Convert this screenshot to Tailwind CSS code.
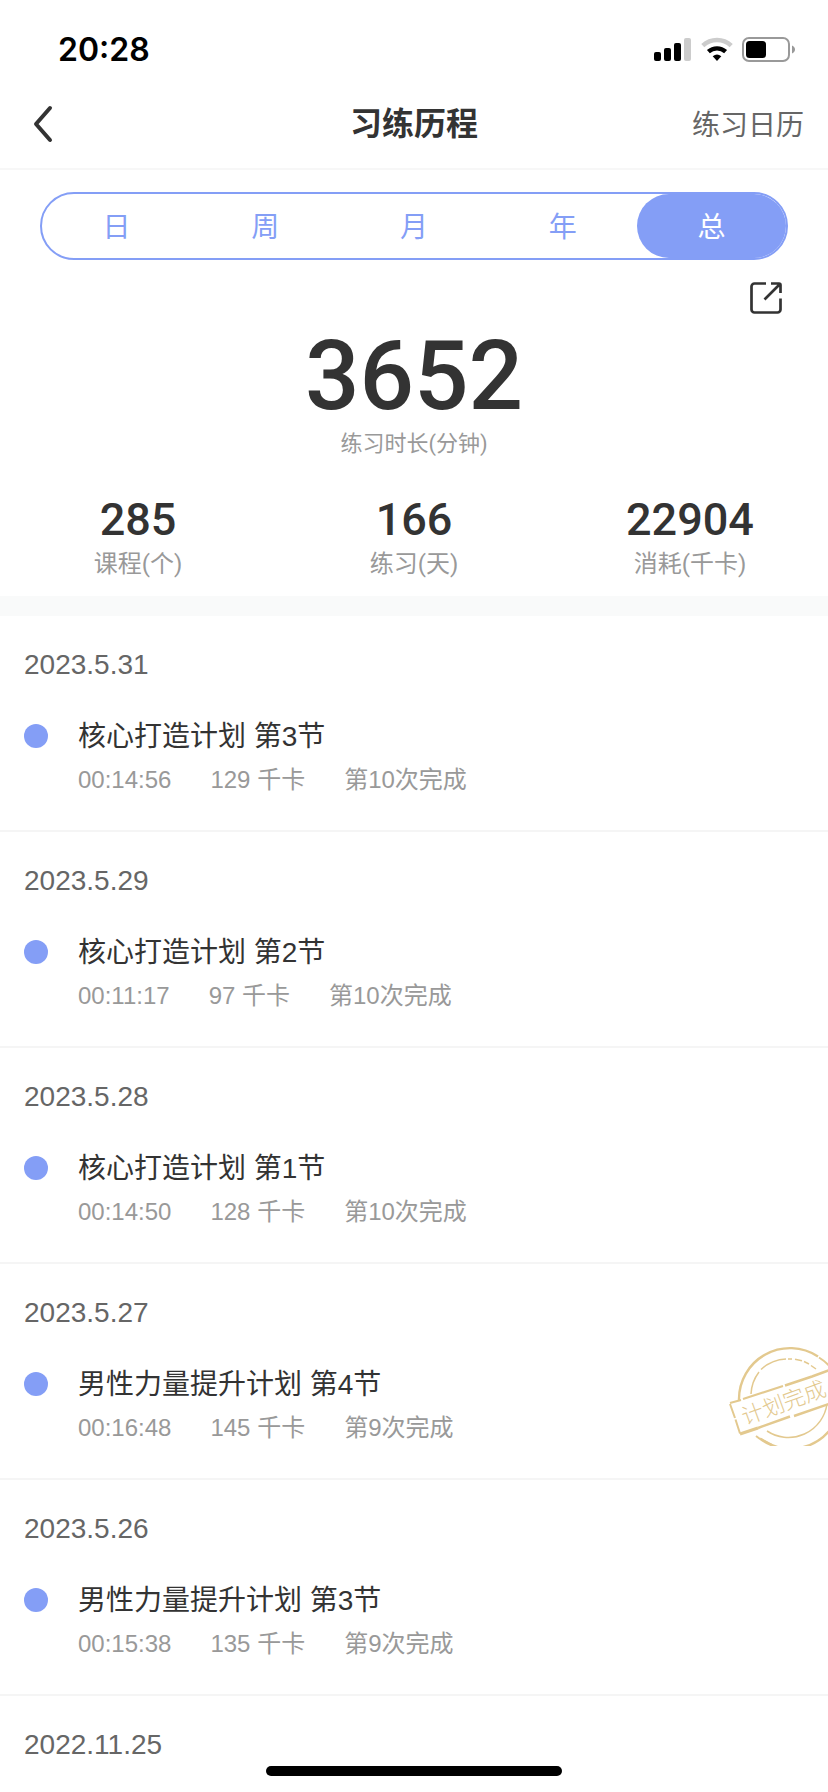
<!DOCTYPE html>
<html lang="zh-CN">
<head>
<meta charset="utf-8">
<meta name="viewport" content="width=device-width, initial-scale=1">
<title>习练历程</title>
<script src="https://cdn.jsdelivr.net/npm/@tailwindcss/browser@4"></script>
</head>
<body class="min-h-screen bg-white font-['Liberation_Sans','Noto_Sans_CJK_SC',sans-serif] text-[#333333]">
<!-- Status bar -->
<div class="flex h-20 items-center justify-between pt-5 pr-8 pl-[58px] text-black">
  <span class="font-['Inter',sans-serif] text-[32px] leading-10 font-semibold">20:28</span>
  <div class="flex items-center gap-[9px]">
    <svg class="h-[26px] w-[38px]" viewBox="0 0 38 26" aria-hidden="true">
      <rect x="0" y="15" width="7" height="9" rx="2"/><rect x="10" y="11" width="7" height="13" rx="2"/><rect x="20" y="6" width="7" height="18" rx="2"/><rect x="30" y="1" width="7" height="23" rx="2" fill="#cccccc"/>
    </svg>
    <svg class="h-[26px] w-8" viewBox="0 0 32 26" fill="none" aria-hidden="true">
      <path d="M1.8 8.600a21 21 0 0 1 28.400 0" stroke="#cccccc" stroke-width="4.600"/>
      <path d="M7.400 14.600a13 13 0 0 1 17.200 0" stroke="#000" stroke-width="4.400"/>
      <path d="M11.700 19.200a6.800 6.800 0 0 1 8.600 0L16 24z" fill="#000"/>
    </svg>
    <svg class="h-[26px] w-[54px]" viewBox="0 0 54 26" fill="none" aria-hidden="true">
      <rect x="1" y="1" width="46" height="23" rx="6" stroke="#999999" stroke-width="2"/>
      <rect x="4" y="4" width="20" height="17" rx="3.500" fill="#000"/>
      <path d="M50 8.500c4 1.500 4 6.500 0 8z" fill="#999999"/>
    </svg>
  </div>
</div>

<!-- Title bar -->
<header class="grid h-[90px] grid-cols-3 items-center border-b-2 border-[#f7f7f7] px-6">
  <button type="button" aria-label="返回" class="flex w-10 justify-center">
    <svg class="h-10 w-6" viewBox="0 0 24 40" fill="none" stroke="#333333" stroke-width="4" stroke-linecap="round" stroke-linejoin="round" aria-hidden="true"><path d="M18 4 4 20l14 16"/></svg>
  </button>
  <h1 class="text-center text-[32px] leading-10 font-bold">习练历程</h1>
  <a href="#calendar" class="pt-1 text-right text-[28px] leading-10 text-[#666666]">练习日历</a>
</header>

<main>
  <section class="pt-[22px]">
    <div role="tablist" class="mx-10 grid h-[68px] grid-cols-5 rounded-full border-2 border-[#849ef6] text-[28px] leading-10 text-[#849ef6]">
      <button type="button" role="tab" aria-selected="false" class="pt-1">日</button>
      <button type="button" role="tab" aria-selected="false" class="pt-1">周</button>
      <button type="button" role="tab" aria-selected="false" class="pt-1">月</button>
      <button type="button" role="tab" aria-selected="false" class="pt-1">年</button>
      <button type="button" role="tab" aria-selected="true" class="rounded-full bg-[#849ef6] pt-1 text-white">总</button>
    </div>
    <div class="flex justify-end pt-5 pr-11">
      <button type="button" aria-label="分享">
        <svg class="size-9" viewBox="0 0 36 36" fill="none" stroke="#333333" stroke-width="2.700" aria-hidden="true">
          <path d="M18 3.500H6.500a3 3 0 0 0-3 3v23a3 3 0 0 0 3 3h23a3 3 0 0 0 3-3V18.500"/>
          <path d="M23 3.500h8a1.500 1.500 0 0 1 1.500 1.500v8M32 4 16.500 19.500"/>
        </svg>
      </button>
    </div>
    <div class="flex flex-col items-center font-['Roboto','Noto_Sans_CJK_SC',sans-serif]">
      <p class="pt-2 text-[96px] leading-[104px] font-medium">3652</p>
      <p class="text-[22px] leading-8 text-[#999999]">练习时长(分钟)</p>
    </div>
    <dl class="grid grid-cols-3 pt-8 pb-4 text-center font-['Roboto','Noto_Sans_CJK_SC',sans-serif]">
      <div class="flex flex-col-reverse"><dt class="text-2xl text-[#999999]">课程(个)</dt><dd class="text-[45px] leading-[56px] font-medium">285</dd></div>
      <div class="flex flex-col-reverse"><dt class="text-2xl text-[#999999]">练习(天)</dt><dd class="text-[45px] leading-[56px] font-medium">166</dd></div>
      <div class="flex flex-col-reverse"><dt class="text-2xl text-[#999999]">消耗(千卡)</dt><dd class="text-[45px] leading-[56px] font-medium">22904</dd></div>
    </dl>
  </section>

  <div class="h-5 bg-[#f9fafa]"></div>

  <section>
    <article class="border-b-2 border-[#f5f5f5] px-6 pt-[33px] pb-[34px]">
      <h2 class="text-[28px] leading-8 text-[#666666]">2023.5.31</h2>
      <div class="flex items-center gap-[30px] pt-[35px]"><span class="size-6 rounded-full bg-[#849ef6]"></span><h3 class="pt-[2px] text-[28px] leading-[38px]">核心打造计划 第3节</h3></div>
      <div class="flex gap-[39px] pt-2 pl-[54px] text-2xl text-[#999999]"><span>00:14:56</span><span>129 千卡</span><span>第10次完成</span></div>
    </article>
    <article class="border-b-2 border-[#f5f5f5] px-6 pt-[33px] pb-[34px]">
      <h2 class="text-[28px] leading-8 text-[#666666]">2023.5.29</h2>
      <div class="flex items-center gap-[30px] pt-[35px]"><span class="size-6 rounded-full bg-[#849ef6]"></span><h3 class="pt-[2px] text-[28px] leading-[38px]">核心打造计划 第2节</h3></div>
      <div class="flex gap-[39px] pt-2 pl-[54px] text-2xl text-[#999999]"><span>00:11:17</span><span>97 千卡</span><span>第10次完成</span></div>
    </article>
    <article class="border-b-2 border-[#f5f5f5] px-6 pt-[33px] pb-[34px]">
      <h2 class="text-[28px] leading-8 text-[#666666]">2023.5.28</h2>
      <div class="flex items-center gap-[30px] pt-[35px]"><span class="size-6 rounded-full bg-[#849ef6]"></span><h3 class="pt-[2px] text-[28px] leading-[38px]">核心打造计划 第1节</h3></div>
      <div class="flex gap-[39px] pt-2 pl-[54px] text-2xl text-[#999999]"><span>00:14:50</span><span>128 千卡</span><span>第10次完成</span></div>
    </article>
    <article class="relative border-b-2 border-[#f5f5f5] px-6 pt-[33px] pb-[34px]">
      <h2 class="text-[28px] leading-8 text-[#666666]">2023.5.27</h2>
      <div class="flex items-center gap-[30px] pt-[35px]"><span class="size-6 rounded-full bg-[#849ef6]"></span><h3 class="pt-[2px] text-[28px] leading-[38px]">男性力量提升计划 第4节</h3></div>
      <div class="flex gap-[39px] pt-2 pl-[54px] text-2xl text-[#999999]"><span>00:16:48</span><span>145 千卡</span><span>第9次完成</span></div>
      <!-- Completion stamp, cut off by the row's right edge -->
      <svg class="absolute right-0 bottom-8 h-[102px] w-[100px]" viewBox="0 0 100 102" fill="none" stroke="#e3c98f" role="img" aria-label="计划完成">
        <path d="M11 56A51 51 0 0 1 90 12.500" stroke-width="2.400"/>
        <path d="M91 13.500A51 51 0 0 1 104 25" stroke-width="2"/>
        <path d="M32 94.500A51 51 0 0 0 102 86" stroke-width="2.400"/>
        <path d="M28 92l4 3M33 95l11 6" stroke-width="2"/>
        <path d="M23 50A39 39 0 0 1 31 28M33 25.500A39 39 0 0 1 58 15M60 15h4M67 15.300l7 1.500M76 17.500l5 2.500M83 21.500l5 3.500" stroke-width="1.500"/>
        <path d="M39 87A39 39 0 0 0 99 60" stroke-width="1.500"/>
        <path d="M2 59l11-3M15 55l40-13" stroke-width="2"/>
        <path d="M57 41.500 84 32.500l18-6.500" stroke-width="2.600"/>
        <path d="M2 60l5 14M7.500 75.500l4.500 14" stroke-width="2"/>
        <path d="M12 90l18-6" stroke-width="3.200"/>
        <path d="M30 84l32-11.500M66 72l36-12.500" stroke-width="2.400"/>
        <text transform="translate(17 81) rotate(-20)" fill="#e3c98f" stroke="none" class="font-['Noto_Sans_CJK_SC',sans-serif] text-[22px] font-light">计划完成</text>
      </svg>
    </article>
    <article class="border-b-2 border-[#f5f5f5] px-6 pt-[33px] pb-[34px]">
      <h2 class="text-[28px] leading-8 text-[#666666]">2023.5.26</h2>
      <div class="flex items-center gap-[30px] pt-[35px]"><span class="size-6 rounded-full bg-[#849ef6]"></span><h3 class="pt-[2px] text-[28px] leading-[38px]">男性力量提升计划 第3节</h3></div>
      <div class="flex gap-[39px] pt-2 pl-[54px] text-2xl text-[#999999]"><span>00:15:38</span><span>135 千卡</span><span>第9次完成</span></div>
    </article>
    <article class="px-6 pt-[33px]">
      <h2 class="text-[28px] leading-8 text-[#666666]">2022.11.25</h2>
    </article>
  </section>
</main>

<!-- Home indicator -->
<div class="fixed inset-x-0 bottom-4 flex justify-center"><div class="h-[10px] w-[296px] rounded-full bg-black"></div></div>
</body>
</html>
